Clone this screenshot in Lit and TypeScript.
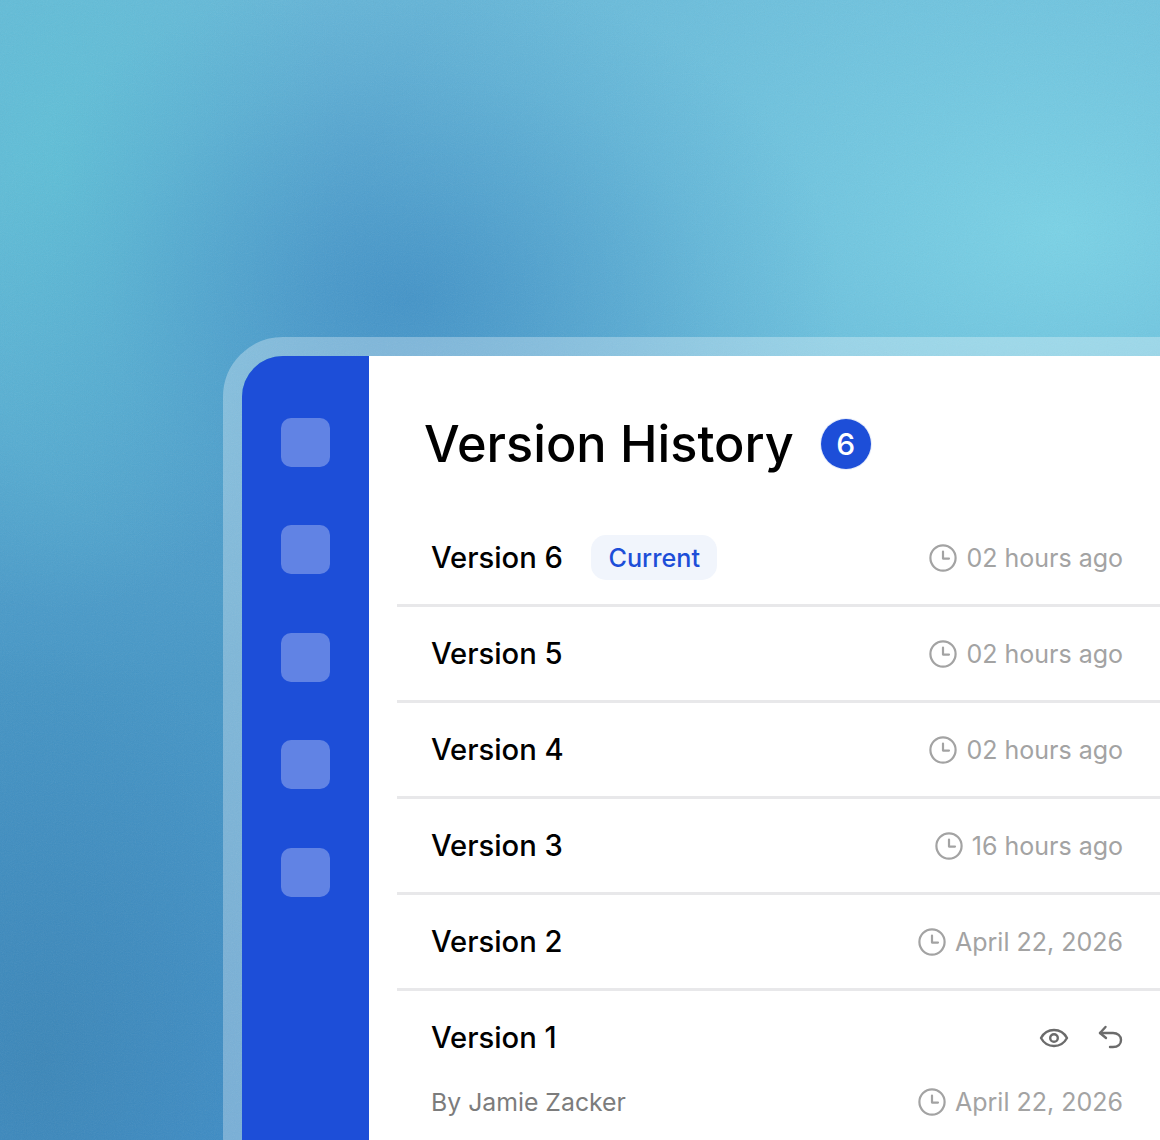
import { LitElement, html, css, svg } from "lit";
import { customElement } from "lit/decorators.js";

const clock = html`<svg class="clock" viewBox="0 0 28 28" fill="none" stroke="currentColor" stroke-width="2.2" stroke-linecap="round" stroke-linejoin="round"><circle cx="14" cy="14" r="12.6"/><path d="M14 7.6V14.6H20"/></svg>`;

const rows = [
  { name: "Version 6", time: "02 hours ago", current: true },
  { name: "Version 5", time: "02 hours ago" },
  { name: "Version 4", time: "02 hours ago" },
  { name: "Version 3", time: "16 hours ago" },
  { name: "Version 2", time: "April 22, 2026" },
];

@customElement("app-root")
export class AppRoot extends LitElement {
  static styles = css`
    :host {
      display: block;
      position: relative;
      width: 1160px;
      height: 1140px;
      overflow: hidden;
      font-family: Inter, "Liberation Sans", sans-serif;
      background:
        radial-gradient(430px 330px at 410px 300px, rgba(60, 140, 196, 0.75), rgba(60, 140, 196, 0.42) 35%, rgba(60, 140, 196, 0.14) 70%, rgba(60, 140, 196, 0) 100%),
        radial-gradient(280px 440px at 60px 170px, rgba(96, 196, 216, 0.8), rgba(96, 196, 216, 0.4) 50%, rgba(96, 196, 216, 0) 100%),
        radial-gradient(700px 480px at 1060px 230px, rgba(122, 210, 230, 1), rgba(122, 210, 230, 0.5) 50%, rgba(122, 210, 230, 0) 100%),
        radial-gradient(300px 420px at 40px 1060px, rgba(58, 132, 180, 0.8), rgba(58, 132, 180, 0) 100%),
        linear-gradient(180deg, #66b6d8 0%, #58a8d2 30%, #4596c6 60%, #3f8fcb 100%);
    }
    .grain {
      position: absolute;
      inset: 0;
      width: 100%;
      height: 100%;
      opacity: 0.1;
      pointer-events: none;
    }
    .frame {
      position: absolute;
      left: 223px;
      top: 337px;
      width: 960px;
      height: 830px;
      box-sizing: border-box;
      border: 19px solid rgba(255, 255, 255, 0.3);
      border-radius: 60px 0 0 0;
      background-clip: padding-box;
      display: flex;
    }
    .side {
      width: 127px;
      flex: none;
      background: #1d4ed8;
      border-radius: 41px 0 0 0;
      box-sizing: border-box;
      padding: 62px 0 0 39px;
      display: flex;
      flex-direction: column;
      gap: 58.4px;
    }
    .sq {
      width: 49px;
      height: 49px;
      border-radius: 10px;
      background: rgba(255, 255, 255, 0.3);
      flex: none;
    }
    .main {
      width: 791px;
      flex: none;
      background: #fff;
      box-sizing: border-box;
      padding: 56px 0 0 28px;
    }
    .head {
      display: flex;
      align-items: center;
      gap: 27px;
      padding-left: 27px;
      height: 64px;
      margin-bottom: 35px;
    }
    h1 {
      margin: 0;
      font-size: 50.4px;
      font-weight: 500;
      color: #000;
      line-height: 64px;
    }
    .count {
      width: 50px;
      height: 50px;
      border-radius: 50%;
      background: #1d4ed8;
      color: #fff;
      font-size: 30px;
      font-weight: 500;
      display: flex;
      align-items: center;
      justify-content: center;
      box-shadow: 0 0 0 1px #e6ecfa;
    }
    .row {
      height: 93px;
      border-bottom: 3px solid #e8e8ea;
      padding: 0 37px 0 34px;
      display: flex;
      align-items: center;
      justify-content: space-between;
    }
    .left { display: flex; align-items: center; gap: 28px; }
    .name {
      font-size: 29.2px;
      font-weight: 450;
      color: #000;
    }
    .tag {
      height: 45px;
      box-sizing: border-box;
      padding: 0 17.5px;
      border-radius: 15px;
      background: #f1f5fc;
      color: #1d4ed8;
      font-size: 25.2px;
      font-weight: 450;
      display: flex;
      align-items: center;
    }
    .time {
      display: flex;
      align-items: center;
      gap: 9px;
      font-size: 25px;
      color: #a3a3a3;
    }
    .clock { width: 28px; height: 28px; flex: none; }
    .last {
      padding: 0 37px 0 34px;
    }
    .last-top {
      height: 93px;
      display: flex;
      align-items: center;
      justify-content: space-between;
    }
    .actions { display: flex; align-items: center; gap: 27px; color: #6b6b6b; margin-right: -3px; }
    .actions svg { width: 30px; height: 30px; display: block; }
    .last-bottom {
      display: flex;
      align-items: center;
      justify-content: space-between;
      height: 36px;
    }
    .by { font-size: 24.8px; color: #7c7c7c; }
  `;

  render() {
    return html`
      <svg class="grain" xmlns="http://www.w3.org/2000/svg">
        ${svg`<filter id="n"><feTurbulence type="fractalNoise" baseFrequency="0.9" numOctaves="2" stitchTiles="stitch"/><feColorMatrix type="saturate" values="0"/></filter><rect width="100%" height="100%" filter="url(#n)"/>`}
      </svg>
      <div class="frame">
        <div class="side">
          ${[0, 1, 2, 3, 4].map(() => html`<div class="sq"></div>`)}
        </div>
        <div class="main">
          <div class="head"><h1>Version History</h1><div class="count">6</div></div>
          ${rows.map(
            (r) => html`<div class="row">
              <div class="left">
                <span class="name">${r.name}</span>
                ${r.current ? html`<span class="tag">Current</span>` : ""}
              </div>
              <div class="time">${clock}<span>${r.time}</span></div>
            </div>`
          )}
          <div class="last">
            <div class="last-top">
              <span class="name">Version 1</span>
              <div class="actions">
                <svg viewBox="0 0 30 30" fill="none" stroke="currentColor" stroke-width="2.4" stroke-linecap="round" stroke-linejoin="round"><path d="M2 15C5 9.5 9.5 7 15 7s10 2.500 13 8c-3 5.500-7.500 8-13 8S5 20.500 2 15Z"/><circle cx="15" cy="15" r="3.800"/></svg>
                <svg viewBox="0 0 30 30" fill="none" stroke="currentColor" stroke-width="2.400" stroke-linecap="round" stroke-linejoin="round"><path d="M9.500 4 4 10l6 5"/><path d="M4 10h13c4.500 0 8 2.800 8 7s-3 7-8 7h-3"/></svg>
              </div>
            </div>
            <div class="last-bottom">
              <span class="by">By Jamie Zacker</span>
              <div class="time">${clock}<span>April 22, 2026</span></div>
            </div>
          </div>
        </div>
      </div>
    `;
  }
}
